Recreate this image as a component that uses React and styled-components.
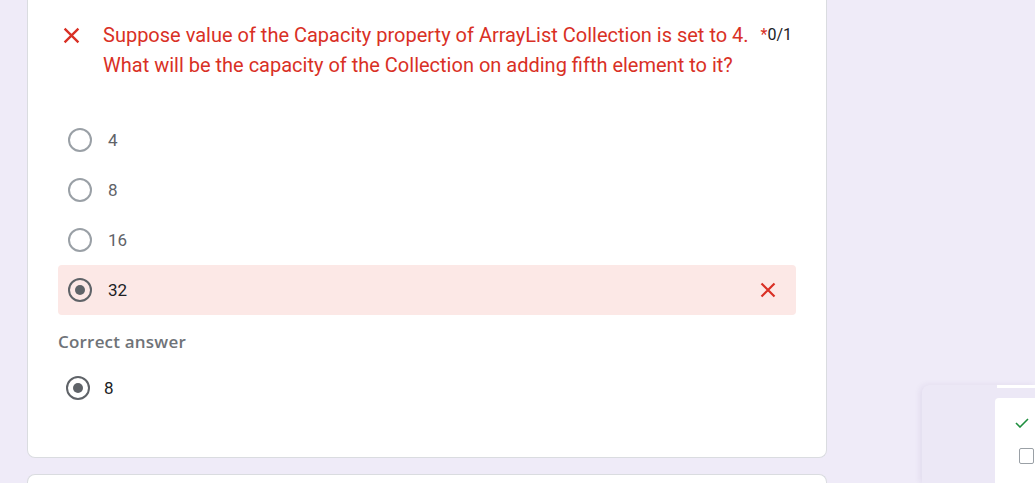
import React from "react";
import styled, { createGlobalStyle } from "styled-components";

const GlobalStyle = createGlobalStyle`
  body {
    margin: 0;
    background-color: #efebf8;
    font-family: Roboto, "Liberation Sans", Arial, sans-serif;
  }
`;

const Page = styled.div`
  padding: 0 0 0 27px;
  display: flex;
  flex-direction: column;
  gap: 16px;
  width: 800px;
`;

const Card = styled.div`
  background: #fff;
  border: 1px solid #dadce0;
  border-radius: ${(props) => (props.top ? "8px 8px 0 0" : "0 0 8px 8px")};
  border-top: ${(props) => (props.top ? "1px solid #dadce0" : "none")};
  border-bottom: ${(props) => (props.top ? "none" : "1px solid #dadce0")};
  padding: ${(props) => (props.top ? "0" : "20px 30px 44px")};
  height: ${(props) => (props.top ? "8px" : "auto")};
`;

const Header = styled.div`
  display: flex;
  align-items: flex-start;
  padding: 0 0 35px 5px;
`;

const IconSlot = styled.div`
  width: 40px;
  height: 30px;
  display: flex;
  align-items: center;
  flex-shrink: 0;
`;

const Title = styled.div`
  flex: 1;
  color: #d93025;
  font-size: 20px;
  line-height: 30px;
`;

const Score = styled.div`
  font-size: 16px;
  line-height: 30px;
  color: #202124;
  padding-right: 4px;
  span {
    color: #d93025;
  }
`;

const Options = styled.div`
  display: flex;
  flex-direction: column;
`;

const Option = styled.div`
  display: flex;
  align-items: center;
  height: 50px;
  padding: 0 ${(props) => (props.compact ? "8px" : "10px")};
  gap: ${(props) => (props.compact ? "14px" : "16px")};
  border-radius: 4px;
  background: ${(props) => (props.wrong ? "#fce8e6" : "transparent")};
`;

const Radio = styled.div`
  width: 20px;
  height: 20px;
  border-radius: 50%;
  border: 2px solid ${(props) => (props.checked ? "#5f6368" : "#9aa0a6")};
  display: flex;
  align-items: center;
  justify-content: center;
  flex-shrink: 0;
  &::after {
    content: "";
    width: 10px;
    height: 10px;
    border-radius: 50%;
    background: ${(props) => (props.checked ? "#5f6368" : "transparent")};
  }
`;

const Label = styled.div`
  flex: 1;
  font-size: 17px;
  color: ${(props) => (props.dark ? "#202124" : "#5f6368")};
`;

const Mark = styled.div`
  width: 24px;
  display: flex;
  justify-content: center;
  margin-right: 6px;
`;

const SectionLabel = styled.div`
  margin-top: 16px;
  font-family: "Open Sans", Roboto, sans-serif;
  font-weight: 600;
  font-size: 17px;
  letter-spacing: 0.2px;
  line-height: 22px;
  color: #6f7378;
  margin-bottom: 10px;
`;

const Widget = styled.div`
  position: fixed;
  left: 922px;
  top: 385px;
  right: 0;
  bottom: 0;
  display: flex;
  background: #ece8f6;
  border-radius: 8px 0 0 0;
  box-shadow: -2px 0 6px rgba(60, 40, 120, 0.08);
`;

const WidgetSide = styled.div`
  width: 73px;
  flex-shrink: 0;
`;

const WidgetMain = styled.div`
  flex: 1;
  display: flex;
  flex-direction: column;
`;

const WidgetStrip = styled.div`
  height: 3px;
  margin-left: 2px;
  background: #fff;
  margin-bottom: 10px;
`;

const WidgetPanel = styled.div`
  flex: 1;
  background: #fff;
  border-radius: 4px 0 0 0;
  padding: 20px 0 0 20px;
  display: flex;
  flex-direction: column;
  gap: 20px;
`;

const Check = styled.div`
  width: 13px;
  height: 14px;
  margin-left: 4px;
  border: 1.5px solid #9aa0a6;
  border-radius: 2px;
`;

const Cross = ({ size = 16 }) => (
  <svg width={size} height={size} viewBox="0 0 16 16">
    <path d="M1.5 1.5 L14.5 14.5 M14.5 1.5 L1.5 14.5" stroke="#d93025" strokeWidth="2.2" fill="none" />
  </svg>
);

const options = [
  { label: "4" },
  { label: "8" },
  { label: "16" },
  { label: "32", selected: true, wrong: true },
];

export default function App() {
  return (
    <>
      <GlobalStyle />
      <Page>
        <Card>
          <Header>
            <IconSlot>
              <Cross size={17} />
            </IconSlot>
            <Title>
              Suppose value of the Capacity property of ArrayList Collection is set to 4.
              <br />
              What will be the capacity of the Collection on adding fifth element to it?
            </Title>
            <Score>
              <span>*</span>0/1
            </Score>
          </Header>
          <Options>
            {options.map((o) => (
              <Option key={o.label} wrong={o.wrong}>
                <Radio checked={o.selected} />
                <Label dark={o.selected}>{o.label}</Label>
                {o.wrong && (
                  <Mark>
                    <Cross />
                  </Mark>
                )}
              </Option>
            ))}
          </Options>
          <SectionLabel>Correct answer</SectionLabel>
          <Option compact>
            <Radio checked />
            <Label dark>8</Label>
          </Option>
        </Card>
        <Card top />
      </Page>
      <Widget>
        <WidgetSide />
        <WidgetMain>
          <WidgetStrip />
          <WidgetPanel>
            <svg width="14" height="10" viewBox="0 0 14 10">
              <path d="M1 5 L5 9 L13 1" stroke="#1e8e3e" strokeWidth="1.6" fill="none" />
            </svg>
            <Check />
          </WidgetPanel>
        </WidgetMain>
      </Widget>
    </>
  );
}
